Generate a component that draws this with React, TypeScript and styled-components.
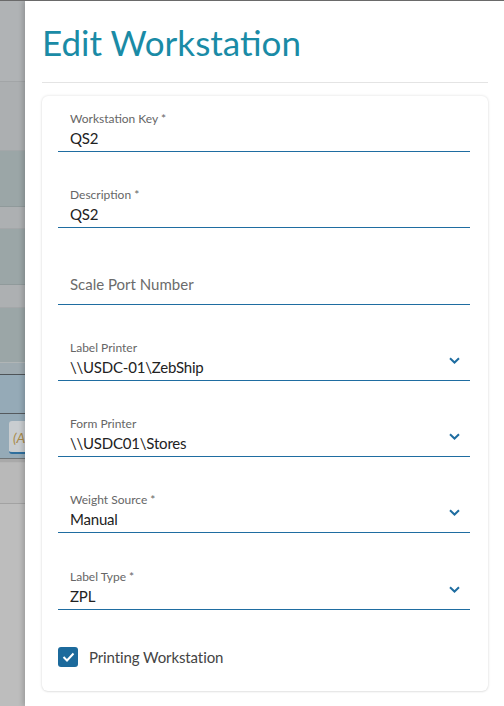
import React from 'react'
import styled, { createGlobalStyle } from 'styled-components'

const GlobalStyle = createGlobalStyle`
  html, body {
    margin: 0;
    padding: 0;
    background: #ffffff;
  }
  body {
    font-family: Lato, "Open Sans", sans-serif;
  }
  * {
    box-sizing: border-box;
  }
`

const Page = styled.div`
  display: flex;
  height: 706px;
  overflow: hidden;
  border-top: 1px solid #6a6a6a;
`

const Backdrop = styled.div`
  width: 25px;
  flex-shrink: 0;
  display: flex;
  flex-direction: column;
  background: #bdbdbd;
`

const Stripe = styled.div<{ $h: number, $bg: string, $line?: string }>`
  position: relative;
  height: ${({ $h }) => $h}px;
  flex-shrink: 0;
  background: ${({ $bg }) => $bg};
  border-bottom: 1px solid ${({ $line, $bg }) => $line || $bg};
  overflow: hidden;
`

const BackButton = styled.div`
  position: absolute;
  left: 9px;
  top: 7px;
  width: 40px;
  height: 33px;
  background: #c9cdd0;
  border-radius: 3px;
  border-bottom: 2px solid #2f6f9d;
  padding: 8px 0 0 4px;
  font-size: 14px;
  font-style: italic;
  color: #a88a4a;
`

const Panel = styled.div`
  flex: 1;
  background: #ffffff;
  padding: 19px 16px 0 17px;
  box-shadow: -2px 0 5px rgba(0, 0, 0, 0.18);
  z-index: 1;
`

const Title = styled.h1`
  margin: 0;
  font-size: 35px;
  line-height: 44px;
  font-weight: 400;
  color: #1a8ba6;
`

const Divider = styled.div`
  height: 1px;
  background: #e4e4e4;
  margin: 18px 0 13px;
`

const Card = styled.div`
  background: #ffffff;
  border-radius: 6px;
  box-shadow: 0 0 3px rgba(0, 0, 0, 0.14), 0 1px 2px rgba(0, 0, 0, 0.06);
  padding: 15px 18px 24px 16px;
  display: flex;
  flex-direction: column;
  gap: 35.3px;
`

const Field = styled.div<{ $empty?: boolean }>`
  position: relative;
  height: 41px;
  padding: 0 12px 3px;
  border-bottom: 1px solid #1f6da1;
  display: flex;
  flex-direction: column;
  justify-content: ${({ $empty }) => ($empty ? 'flex-end' : 'flex-start')};
`

const Label = styled.div`
  font-size: 12px;
  line-height: 16px;
  color: #666666;
`

const Value = styled.div`
  margin-top: 1px;
  font-size: 15px;
  line-height: 20px;
  letter-spacing: -0.2px;
  color: #222222;
`

const Placeholder = styled.div`
  margin-bottom: 7px;
  font-size: 15px;
  line-height: 20px;
  color: #6b6b6b;
`

const Chevron = styled.svg`
  position: absolute;
  right: 10px;
  top: 17px;
  width: 11px;
  height: 7px;
`

const CheckRow = styled.label`
  display: flex;
  align-items: center;
  gap: 11px;
  margin-top: 2px;
  font-size: 15px;
  letter-spacing: -0.1px;
  color: #444444;
`

const CheckBox = styled.span`
  width: 20px;
  height: 20px;
  border-radius: 3px;
  background: #1c6a9c;
  display: flex;
  align-items: center;
  justify-content: center;
`

type FieldProps = {
  label: string,
  value?: string,
  select?: boolean,
}

const FormField: React.FC<FieldProps> = ({ label, value, select }) => {
  if (!value) {
    return (
      <Field $empty>
        <Placeholder>{label}</Placeholder>
      </Field>
    )
  }
  return (
    <Field>
      <Label>{label}</Label>
      <Value>{value}</Value>
      {select && (
        <Chevron viewBox="0 0 11 7">
          <path d="M1 1.2l4.5 4.3 4.5-4.3" fill="none" stroke="#1f6da1" strokeWidth="2" />
        </Chevron>
      )}
    </Field>
  )
}

const stripes = [
  { h: 81, bg: '#b0b3b5', line: '#a2a5a7' },
  { h: 69, bg: '#acafb1', line: '#a3a7a9' },
  { h: 56, bg: '#9ba6a7', line: '#909a9b' },
  { h: 22, bg: '#adb0b2', line: '#a4a7a9' },
  { h: 56, bg: '#9ba6a7', line: '#909a9b' },
  { h: 23, bg: '#adb0b2', line: '#a4a7a9' },
  { h: 55, bg: '#9ba6a7', line: '#b0b5b6' },
  { h: 12, bg: '#9eaab0', line: '#4e5458' },
  { h: 39, bg: '#95aab7', line: '#555a5e' },
]

const App: React.FC = () => {
  return (
    <>
      <GlobalStyle />
      <Page>
        <Backdrop>
          {stripes.map((s, i) => (
            <Stripe key={i} $h={s.h} $bg={s.bg} $line={s.line} />
          ))}
          <Stripe $h={45} $bg="#95aab7" $line="#6f7375">
            <BackButton>(A</BackButton>
          </Stripe>
          <Stripe $h={4} $bg="#a9a9a9" $line="#b5b5b5" />
          <Stripe $h={41} $bg="#b9b9b9" $line="#a2a2a2" />
        </Backdrop>
        <Panel>
          <Title>Edit Workstation</Title>
          <Divider />
          <Card>
            <FormField label="Workstation Key *" value="QS2" />
            <FormField label="Description *" value="QS2" />
            <FormField label="Scale Port Number" />
            <FormField label="Label Printer" value="\\USDC-01\ZebShip" select />
            <FormField label="Form Printer" value="\\USDC01\Stores" select />
            <FormField label="Weight Source *" value="Manual" select />
            <FormField label="Label Type *" value="ZPL" select />
            <CheckRow>
              <CheckBox>
                <svg width="13" height="10" viewBox="0 0 13 10">
                  <path d="M1.5 5l3.5 3.5 6.5-7" fill="none" stroke="#ffffff" strokeWidth="2" />
                </svg>
              </CheckBox>
              Printing Workstation
            </CheckRow>
          </Card>
        </Panel>
      </Page>
    </>
  )
}

export default App
